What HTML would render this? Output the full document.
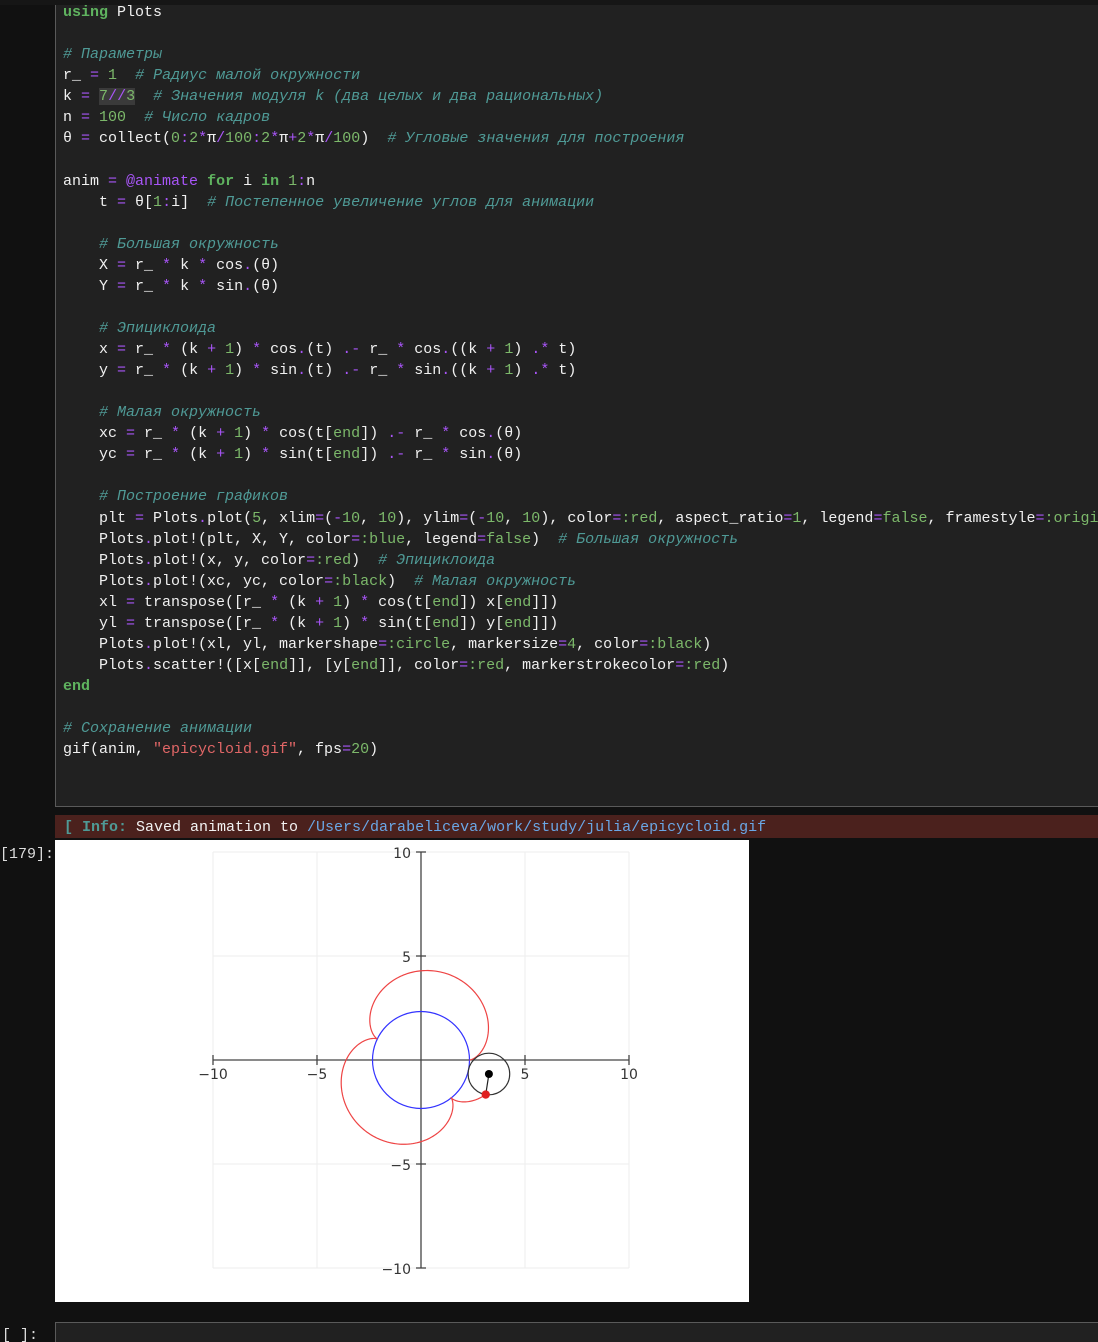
<!DOCTYPE html>
<html><head><meta charset="utf-8"><style>
html,body{margin:0;padding:0;background:#111;width:1098px;height:1342px;overflow:hidden;position:relative;font-family:"Liberation Mono","DejaVu Sans Mono",monospace;}
.cell{position:absolute;left:55px;top:-2px;width:1050px;height:809px;background:#212121;border:1px solid #5a5a5a;box-sizing:border-box;}
pre{position:absolute;left:63px;top:2px;margin:0;font-family:"Liberation Mono","DejaVu Sans Mono",monospace;font-size:15px;line-height:21.06px;color:#f0f0f0;white-space:pre;}
.k{color:#5fb35f;font-weight:bold}.n{color:#7cb86a}.o{color:#a855f7}.c{color:#4f9a96;font-style:italic}.s{color:#e06666}.hl{background:#3a3a3a}
.g{position:absolute;color:#ddd;font-size:15px;font-family:"Liberation Mono",monospace}
.info{position:absolute;left:55px;top:815px;width:1043px;height:23px;background:#4b211d;font-size:15px;line-height:26px;color:#f2f2f2;padding-left:9px;box-sizing:border-box;white-space:pre}
.plot{position:absolute;left:55px;top:840px;width:694px;height:462px;background:#fff}
.cell2{position:absolute;left:55px;top:1322px;width:1050px;height:40px;background:#212121;border:1px solid #5a5a5a;box-sizing:border-box}
.tb{position:absolute;left:0;top:0;width:1098px;height:5px;background:#161616}
</style></head><body>
<div class="cell"></div>
<div class="g" style="left:0;top:-12px">[179]:</div>
<pre><span class="k">using</span> Plots

<span class="c"># Параметры</span>
r_ <span class="o">=</span> <span class="n">1</span>  <span class="c"># Радиус малой окружности</span>
k <span class="o">=</span> <span class="hl"><span class="n">7</span><span class="o">//</span><span class="n">3</span></span>  <span class="c"># Значения модуля k (два целых и два рациональных)</span>
n <span class="o">=</span> <span class="n">100</span>  <span class="c"># Число кадров</span>
θ <span class="o">=</span> collect(<span class="n">0</span><span class="o">:</span><span class="n">2</span><span class="o">*</span>π<span class="o">/</span><span class="n">100</span><span class="o">:</span><span class="n">2</span><span class="o">*</span>π<span class="o">+</span><span class="n">2</span><span class="o">*</span>π<span class="o">/</span><span class="n">100</span>)  <span class="c"># Угловые значения для построения</span>

anim <span class="o">=</span> <span class="o">@animate</span> <span class="k">for</span> i <span class="k">in</span> <span class="n">1</span><span class="o">:</span>n
    t <span class="o">=</span> θ[<span class="n">1</span><span class="o">:</span>i]  <span class="c"># Постепенное увеличение углов для анимации</span>

    <span class="c"># Большая окружность</span>
    X <span class="o">=</span> r_ <span class="o">*</span> k <span class="o">*</span> cos<span class="o">.</span>(θ)
    Y <span class="o">=</span> r_ <span class="o">*</span> k <span class="o">*</span> sin<span class="o">.</span>(θ)

    <span class="c"># Эпициклоида</span>
    x <span class="o">=</span> r_ <span class="o">*</span> (k <span class="o">+</span> <span class="n">1</span>) <span class="o">*</span> cos<span class="o">.</span>(t) <span class="o">.-</span> r_ <span class="o">*</span> cos<span class="o">.</span>((k <span class="o">+</span> <span class="n">1</span>) <span class="o">.*</span> t)
    y <span class="o">=</span> r_ <span class="o">*</span> (k <span class="o">+</span> <span class="n">1</span>) <span class="o">*</span> sin<span class="o">.</span>(t) <span class="o">.-</span> r_ <span class="o">*</span> sin<span class="o">.</span>((k <span class="o">+</span> <span class="n">1</span>) <span class="o">.*</span> t)

    <span class="c"># Малая окружность</span>
    xc <span class="o">=</span> r_ <span class="o">*</span> (k <span class="o">+</span> <span class="n">1</span>) <span class="o">*</span> cos(t[<span class="n">end</span>]) <span class="o">.-</span> r_ <span class="o">*</span> cos<span class="o">.</span>(θ)
    yc <span class="o">=</span> r_ <span class="o">*</span> (k <span class="o">+</span> <span class="n">1</span>) <span class="o">*</span> sin(t[<span class="n">end</span>]) <span class="o">.-</span> r_ <span class="o">*</span> sin<span class="o">.</span>(θ)

    <span class="c"># Построение графиков</span>
    plt <span class="o">=</span> Plots<span class="o">.</span>plot(<span class="n">5</span>, xlim<span class="o">=</span>(<span class="o">-</span><span class="n">10</span>, <span class="n">10</span>), ylim<span class="o">=</span>(<span class="o">-</span><span class="n">10</span>, <span class="n">10</span>), color<span class="o">=</span><span class="n">:red</span>, aspect_ratio<span class="o">=</span><span class="n">1</span>, legend<span class="o">=</span><span class="n">false</span>, framestyle<span class="o">=</span><span class="n">:origin</span>)
    Plots<span class="o">.</span>plot!(plt, X, Y, color<span class="o">=</span><span class="n">:blue</span>, legend<span class="o">=</span><span class="n">false</span>)  <span class="c"># Большая окружность</span>
    Plots<span class="o">.</span>plot!(x, y, color<span class="o">=</span><span class="n">:red</span>)  <span class="c"># Эпициклоида</span>
    Plots<span class="o">.</span>plot!(xc, yc, color<span class="o">=</span><span class="n">:black</span>)  <span class="c"># Малая окружность</span>
    xl <span class="o">=</span> transpose([r_ <span class="o">*</span> (k <span class="o">+</span> <span class="n">1</span>) <span class="o">*</span> cos(t[<span class="n">end</span>]) x[<span class="n">end</span>]])
    yl <span class="o">=</span> transpose([r_ <span class="o">*</span> (k <span class="o">+</span> <span class="n">1</span>) <span class="o">*</span> sin(t[<span class="n">end</span>]) y[<span class="n">end</span>]])
    Plots<span class="o">.</span>plot!(xl, yl, markershape<span class="o">=</span><span class="n">:circle</span>, markersize<span class="o">=</span><span class="n">4</span>, color<span class="o">=</span><span class="n">:black</span>)
    Plots<span class="o">.</span>scatter!([x[<span class="n">end</span>]], [y[<span class="n">end</span>]], color<span class="o">=</span><span class="n">:red</span>, markerstrokecolor<span class="o">=</span><span class="n">:red</span>)
<span class="k">end</span>

<span class="c"># Сохранение анимации</span>
gif(anim, <span class="s">"epicycloid.gif"</span>, fps<span class="o">=</span><span class="n">20</span>)</pre>
<div class="tb"></div>
<div class="info"><span style="color:#4f9a96;font-weight:bold">[ Info: </span>Saved animation to <span style="color:#6aa7e6">/Users/darabeliceva/work/study/julia/epicycloid.gif</span></div>
<div class="g" style="left:0;top:846px">[179]:</div>
<div class="plot"><svg width="694" height="462" viewBox="55 840 694 462" xmlns="http://www.w3.org/2000/svg" font-family="DejaVu Sans, Liberation Sans, sans-serif" font-size="14" fill="#333">
<g stroke="#eee" stroke-width="1"><line x1="213" y1="852" x2="213" y2="1268"/><line x1="317" y1="852" x2="317" y2="1268"/><line x1="525" y1="852" x2="525" y2="1268"/><line x1="629" y1="852" x2="629" y2="1268"/><line x1="213" y1="852" x2="629" y2="852"/><line x1="213" y1="956" x2="629" y2="956"/><line x1="213" y1="1164" x2="629" y2="1164"/><line x1="213" y1="1268" x2="629" y2="1268"/></g>
<g stroke="#444" stroke-width="1.3"><line x1="213" y1="1060" x2="629" y2="1060"/><line x1="421" y1="852" x2="421" y2="1268"/>
<line x1="213" y1="1055" x2="213" y2="1065"/><line x1="317" y1="1055" x2="317" y2="1065"/><line x1="525" y1="1055" x2="525" y2="1065"/><line x1="629" y1="1055" x2="629" y2="1065"/>
<line x1="416" y1="852" x2="426" y2="852"/><line x1="416" y1="956" x2="426" y2="956"/><line x1="416" y1="1164" x2="426" y2="1164"/><line x1="416" y1="1268" x2="426" y2="1268"/></g>
<text x="213" y="1079" text-anchor="middle">−10</text><text x="317" y="1079" text-anchor="middle">−5</text><text x="525" y="1079" text-anchor="middle">5</text><text x="629" y="1079" text-anchor="middle">10</text>
<text x="411" y="858" text-anchor="end">10</text><text x="411" y="962" text-anchor="end">5</text><text x="411" y="1170" text-anchor="end">−5</text><text x="411" y="1274" text-anchor="end">−10</text>
<circle cx="421" cy="1060" r="48.5" fill="none" stroke="#3333ff" stroke-width="1.2"/>
<path id="epi" fill="none" stroke="#ee4444" stroke-width="1.2" d=""/>
<circle id="sc" cx="489" cy="1074" r="20.8" fill="none" stroke="#333" stroke-width="1.2"/>
<line id="ln" x1="489" y1="1074" x2="487" y2="1095" stroke="#222" stroke-width="1.2"/>
<circle id="cd" cx="489" cy="1074" r="4" fill="#000"/>
<circle id="rd" cx="487" cy="1095" r="4.2" fill="#e02020"/>
</svg></div>
<div class="cell2"></div>
<div class="g" style="left:2px;top:1327px">[ ]:</div>
<script>
(function(){var s=20.8,ox=421,oy=1060,T=6.08,d="";
for(var i=0;i<=400;i++){var t=T*i/400;var x=(10/3)*Math.cos(t)-Math.cos(10*t/3),y=(10/3)*Math.sin(t)-Math.sin(10*t/3);
d+=(i?"L":"M")+(ox+x*s).toFixed(2)+" "+(oy-y*s).toFixed(2);}
document.getElementById("epi").setAttribute("d",d);
var cx=ox+(10/3)*Math.cos(T)*s,cy=oy-(10/3)*Math.sin(T)*s;
var px=ox+((10/3)*Math.cos(T)-Math.cos(10*T/3))*s,py=oy-((10/3)*Math.sin(T)-Math.sin(10*T/3))*s;
["sc","cd"].forEach(function(id){var e=document.getElementById(id);e.setAttribute("cx",cx);e.setAttribute("cy",cy);});
var r=document.getElementById("rd");r.setAttribute("cx",px);r.setAttribute("cy",py);
var l=document.getElementById("ln");l.setAttribute("x1",cx);l.setAttribute("y1",cy);l.setAttribute("x2",px);l.setAttribute("y2",py);})();
</script>
</body></html>
